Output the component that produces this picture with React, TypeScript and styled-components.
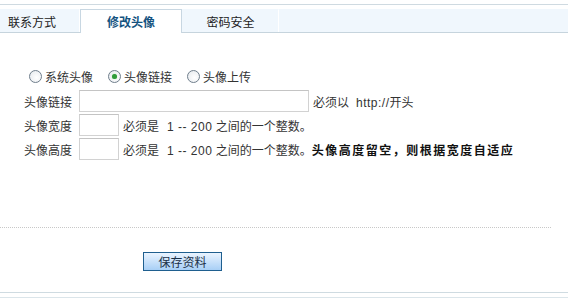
import React, { useState } from 'react'
import styled, { createGlobalStyle } from 'styled-components'

const GlobalStyle = createGlobalStyle`
    body {
        margin: 0;
        background: #ffffff;
        font-family: "Liberation Sans", "Noto Sans CJK SC", sans-serif;
        font-size: 12px;
        color: #333333;
    }
`

const Page = styled.div`
    width: 568px;
    height: 303px;
    padding-top: 4px;
    box-sizing: border-box;
    overflow: hidden;
`

const TopRule = styled.div`
    height: 1px;
    background: #cfdae1;
    margin-bottom: 4px;
`

const TabStrip = styled.div`
    display: flex;
    height: 23px;
    background: #f0f7fd;
    border-bottom: 1px solid #c6d4dd;
`

const Tab = styled.div<{ active?: boolean; w: number; align?: string }>`
    width: ${({ w }) => w}px;
    box-sizing: border-box;
    display: flex;
    align-items: center;
    justify-content: ${({ align }) => align || 'center'};
    padding-left: ${({ align }) => (align === 'flex-start' ? '7px' : '0')};
    font-size: 12px;
    font-family: "Noto Sans CJK SC", sans-serif;
    color: ${({ active }) => (active ? '#14537f' : '#222222')};
    font-weight: ${({ active }) => (active ? 'bold' : 'normal')};
    background: ${({ active }) => (active ? '#ffffff' : 'transparent')};
    border: 1px solid ${({ active }) => (active ? '#c8d7e2' : 'transparent')};
    border-bottom: none;
    height: ${({ active }) => (active ? '24px' : '23px')};
    border-right: ${({ active }) => (active ? '1px solid #c8d7e2' : '1px solid #ffffff')};
`

const TabRest = styled.div`
    flex: 1;
`

const Form = styled.div`
    padding: 35px 0 0 24px;
    height: 194px;
    box-sizing: border-box;
`

const RadioRow = styled.div`
    display: flex;
    align-items: center;
    height: 16px;
    padding-left: 5px;
    margin-bottom: 6px;
`

const RadioItem = styled.label`
    display: flex;
    align-items: center;
    margin-right: 15px;
    font-family: "Noto Sans CJK SC", sans-serif;
    cursor: pointer;
`

const RadioDot = styled.span<{ checked: boolean }>`
    width: 11px;
    height: 11px;
    border-radius: 50%;
    border: 1px solid #6f7e8c;
    background: radial-gradient(circle at 60% 60%, #ffffff 0%, #e4e8ec 100%);
    margin-right: 3px;
    display: flex;
    align-items: center;
    justify-content: center;
    &::after {
        content: '';
        width: 5px;
        height: 5px;
        border-radius: 50%;
        background: ${({ checked }) => (checked ? '#2f9b3a' : 'transparent')};
        box-shadow: ${({ checked }) => (checked ? '0 0 1px #7fd07f' : 'none')};
    }
`

const FieldRow = styled.div`
    display: flex;
    align-items: center;
    height: 22px;
    margin-bottom: 2px;
`

const Label = styled.span`
    width: 55px;
    font-family: "Noto Sans CJK SC", sans-serif;
`

const TextInput = styled.input<{ w: number }>`
    width: ${({ w }) => w}px;
    height: 22px;
    box-sizing: border-box;
    border: 1px solid #d2d2d2;
    border-top-color: #c4c4c4;
    padding: 0 3px;
    margin: 0 4px 0 0;
    font-size: 12px;
    outline: none;
`

const Hint = styled.span`
    white-space: nowrap;
`

const Num = styled.span<{ gap?: number }>`
    letter-spacing: 0.5px;
    margin-left: ${({ gap }) => gap || 0}px;
`

const Strong = styled.b`
    color: #111111;
    letter-spacing: 1.5px;
    font-family: "Noto Sans CJK SC", sans-serif;
`

const DottedRule = styled.div`
    width: 551px;
    border-top: 1px dotted #c8c8c8;
`

const ButtonRow = styled.div`
    padding: 24px 0 0 143px;
    height: 64px;
    box-sizing: border-box;
`

const SaveButton = styled.button`
    width: 79px;
    height: 19px;
    padding: 0;
    border: 1px solid #1f5f8f;
    background: linear-gradient(#eaf4ff, #a8cff6);
    color: #1b2f45;
    font-size: 12px;
    font-family: "Noto Sans CJK SC", sans-serif;
    line-height: 17px;
    cursor: pointer;
`

const BottomRule = styled.div`
    height: 4px;
    border-top: 1px solid #cfdbe1;
    border-bottom: 1px solid #dbe5ea;
`

export default function App() {
    const [kind, setKind] = useState('link')
    const radios = [
        { key: 'system', text: '系统头像' },
        { key: 'link', text: '头像链接' },
        { key: 'upload', text: '头像上传' },
    ]
    return (
        <Page>
            <GlobalStyle />
            <TopRule />
            <TabStrip>
                <Tab w={80} align="flex-start">联系方式</Tab>
                <Tab w={102} active>修改头像</Tab>
                <Tab w={97}>密码安全</Tab>
                <TabRest />
            </TabStrip>
            <Form>
                <RadioRow>
                    {radios.map(r => (
                        <RadioItem key={r.key} onClick={() => setKind(r.key)}>
                            <RadioDot checked={kind === r.key} />
                            {r.text}
                        </RadioItem>
                    ))}
                </RadioRow>
                <FieldRow>
                    <Label>头像链接</Label>
                    <TextInput w={230} />
                    <Hint>必须以<Num gap={7}>http://</Num>开头</Hint>
                </FieldRow>
                <FieldRow>
                    <Label>头像宽度</Label>
                    <TextInput w={40} />
                    <Hint>必须是<Num gap={8}>1 -- 200</Num> 之间的一个整数。</Hint>
                </FieldRow>
                <FieldRow>
                    <Label>头像高度</Label>
                    <TextInput w={40} />
                    <Hint>
                        必须是<Num gap={8}>1 -- 200</Num> 之间的一个整数。<Strong>头像高度留空，则根据宽度自适应</Strong>
                    </Hint>
                </FieldRow>
            </Form>
            <DottedRule />
            <ButtonRow>
                <SaveButton>保存资料</SaveButton>
            </ButtonRow>
            <BottomRule />
        </Page>
    )
}
